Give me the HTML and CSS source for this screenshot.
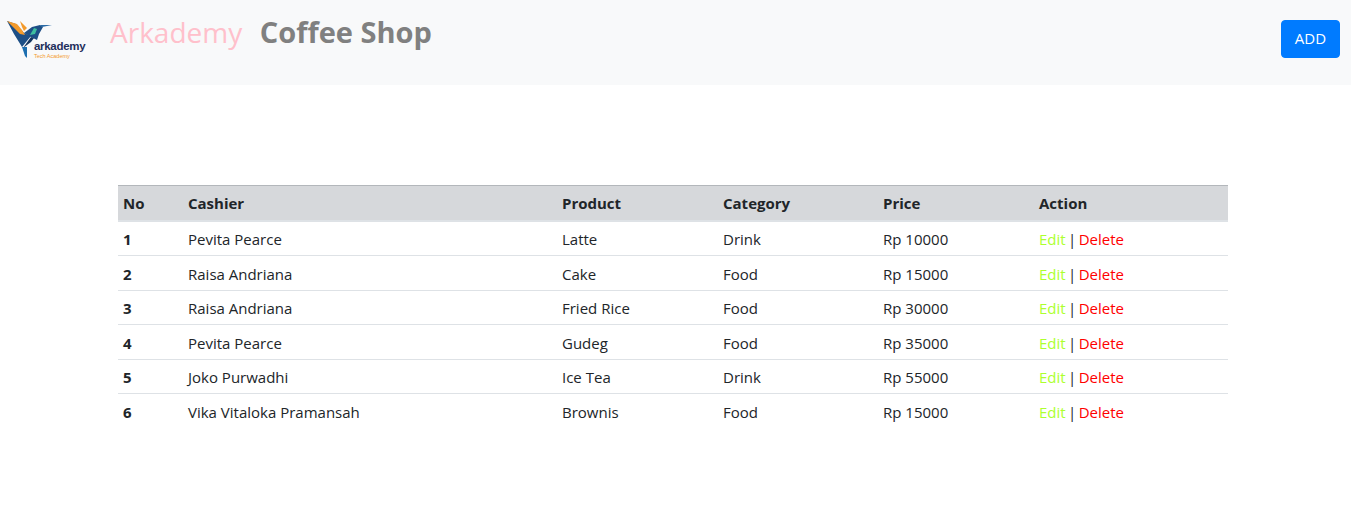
FILE: index.html
```html
<!DOCTYPE html>
<html lang="en">
<head>
    <meta charset="UTF-8">
    <meta name="viewport" content="width=device-width, initial-scale=1.0">
    <title>Arkademy Coffee Shop</title>
    <link rel="stylesheet" href="styles.css">
</head>
<body>
    <nav class="navbar">
        <div class="brand">
            <div class="logo">
                <svg class="logo-bird" viewBox="0 0 50 40" width="50" height="40">
                    <polygon points="0,1 9,4 17,13 24,16 15,27 7,14" fill="#1d4f86"/>
                    <polygon points="0,1 10,4 15,10 18,15 13,14 7,8" fill="#f39a2b"/>
                    <polygon points="13,1 20,8 17,11 15,7" fill="#f39a2b"/>
                    <polygon points="17,13 25,7 33,5 36,7 32,14 30,20 24,17" fill="#1d4f86"/>
                    <polygon points="23,15 27,8 30,9 28,14" fill="#3fbf9f"/>
                    <polygon points="33,5 45,5 35,7" fill="#2a6aa5"/>
                    <polygon points="24,17 27,18 24,22 16,28" fill="#16365f"/>
                    <polygon points="15,27 20,27 20,38 18,36" fill="#1d6fb0"/>
                </svg>
                <span class="logo-name">arkademy</span>
                <span class="logo-sub">Tech Academy</span>
            </div>
            <h2 class="title"><span class="title-light">Arkademy</span> <strong class="title-bold">Coffee Shop</strong></h2>
        </div>
        <button class="btn-add" type="button">ADD</button>
    </nav>

    <div class="container">
        <table class="table">
            <thead>
                <tr>
                    <th class="col-no">No</th>
                    <th class="col-cashier">Cashier</th>
                    <th class="col-product">Product</th>
                    <th class="col-category">Category</th>
                    <th class="col-price">Price</th>
                    <th>Action</th>
                </tr>
            </thead>
            <tbody>
                <tr>
                    <th>1</th><td>Pevita Pearce</td><td>Latte</td><td>Drink</td><td>Rp 10000</td>
                    <td class="actions"><a class="edit" href="#">Edit</a> | <a class="delete" href="#">Delete</a></td>
                </tr>
                <tr>
                    <th>2</th><td>Raisa Andriana</td><td>Cake</td><td>Food</td><td>Rp 15000</td>
                    <td class="actions"><a class="edit" href="#">Edit</a> | <a class="delete" href="#">Delete</a></td>
                </tr>
                <tr>
                    <th>3</th><td>Raisa Andriana</td><td>Fried Rice</td><td>Food</td><td>Rp 30000</td>
                    <td class="actions"><a class="edit" href="#">Edit</a> | <a class="delete" href="#">Delete</a></td>
                </tr>
                <tr>
                    <th>4</th><td>Pevita Pearce</td><td>Gudeg</td><td>Food</td><td>Rp 35000</td>
                    <td class="actions"><a class="edit" href="#">Edit</a> | <a class="delete" href="#">Delete</a></td>
                </tr>
                <tr>
                    <th>5</th><td>Joko Purwadhi</td><td>Ice Tea</td><td>Drink</td><td>Rp 55000</td>
                    <td class="actions"><a class="edit" href="#">Edit</a> | <a class="delete" href="#">Delete</a></td>
                </tr>
                <tr>
                    <th>6</th><td>Vika Vitaloka Pramansah</td><td>Brownis</td><td>Food</td><td>Rp 15000</td>
                    <td class="actions"><a class="edit" href="#">Edit</a> | <a class="delete" href="#">Delete</a></td>
                </tr>
            </tbody>
        </table>
    </div>
</body>
</html>
```

FILE: styles.css
```css
* {
    box-sizing: border-box;
}

body {
    margin: 0;
    background-color: #fff;
    color: #212529;
    font-family: "Open Sans", "Noto Sans", sans-serif;
    font-size: 16px;
    line-height: 24px;
}

.navbar {
    display: flex;
    justify-content: space-between;
    height: 85px;
    padding: 8px 11px 8px 0;
    background-color: #f8f9fa;
}

.brand {
    display: flex;
    align-items: flex-start;
}

.logo {
    display: flex;
    flex-direction: column;
    width: 110px;
    padding: 12px 0 0 7px;
}

.logo-bird {
    display: block;
}

.logo-name {
    margin: -19px 0 0 27px;
    color: #1f2f5c;
    font-family: "Liberation Sans", sans-serif;
    font-size: 11.5px;
    font-weight: 700;
    line-height: 11px;
    letter-spacing: -0.3px;
}

.logo-sub {
    margin: 2px 0 0 27px;
    color: #f39a2b;
    font-family: "Liberation Sans", sans-serif;
    font-size: 5.5px;
    line-height: 5px;
}

.title {
    margin: -1px 0 0;
    font-size: 29px;
    font-weight: 400;
    line-height: 50px;
}

.title-light {
    color: pink;
    font-size: 28px;
    margin-right: 10px;
}

.title-bold {
    color: gray;
    font-weight: 700;
}

.btn-add {
    align-self: flex-start;
    width: 59px;
    height: 38px;
    margin-top: 12px;
    padding: 0 0 2px;
    border: 1px solid #007bff;
    border-radius: 4px;
    background-color: #007bff;
    color: #fff;
    font: inherit;
    font-size: 15px;
    cursor: pointer;
}

.container {
    width: 1110px;
    margin: 100px auto 0 118px;
}

.table {
    width: 100%;
    table-layout: fixed;
    border-collapse: collapse;
    font-size: 15px;
}

.table th,
.table td {
    height: 34.6px;
    padding: 5.6px 5px 4px;
    border-top: 1px solid #dee2e6;
    text-align: left;
    vertical-align: top;
}

.table thead th {
    height: 35px;
    padding: 2px 5px 5px;
    border-top-color: #b3b7bb;
    border-bottom: 2px solid #dee2e6;
    background-color: #d6d8db;
    vertical-align: bottom;
}

.col-no { width: 65px; }
.col-cashier { width: 374px; }
.col-product { width: 161px; }
.col-category { width: 160px; }
.col-price { width: 156px; }

.actions {
    word-spacing: -1.5px;
}

.edit {
    color: #adff2f;
    text-decoration: none;
}

.delete {
    color: red;
    text-decoration: none;
}
```
